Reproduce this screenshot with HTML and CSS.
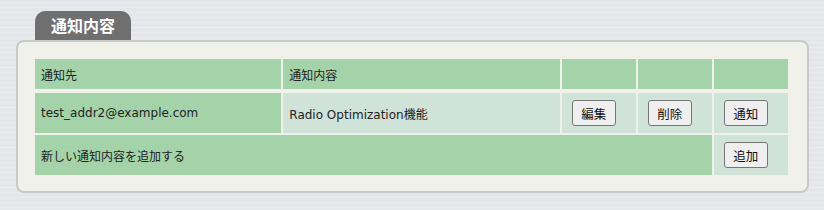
FILE: index.html
```html
<!DOCTYPE html>
<html lang="ja">
<head>
    <meta charset="UTF-8">
    <title>通知内容</title>
    <link rel="stylesheet" href="styles.css">
</head>
<body>

    <div class="page">
        <div class="tab">通知内容</div>

        <div class="panel">
            <table class="notify-table">
                <thead>
                    <tr>
                        <th class="col-addr">通知先</th>
                        <th class="col-content">通知内容</th>
                        <th class="col-btn"></th>
                        <th class="col-btn"></th>
                        <th class="col-btn"></th>
                    </tr>
                </thead>
                <tbody>
                    <tr>
                        <td class="addr">test_addr2@example.com</td>
                        <td class="light content">Radio Optimization機能</td>
                        <td class="light"><button class="btn">編集</button></td>
                        <td class="light"><button class="btn">削除</button></td>
                        <td class="light"><button class="btn">通知</button></td>
                    </tr>
                    <tr>
                        <td class="add-row" colspan="4">新しい通知内容を追加する</td>
                        <td class="light"><button class="btn">追加</button></td>
                    </tr>
                </tbody>
            </table>
        </div>
    </div>

</body>
</html>
```

FILE: styles.css
```css
body {
    margin: 0;
    font-family: "DejaVu Sans", "Noto Sans CJK JP", sans-serif;
    font-size: 12px;
    color: #222;
    background-color: #e3e5e9;
    background-image: repeating-linear-gradient(
        180deg,
        #e6e8ec 0px,
        #dfe1e5 1px,
        #eceef1 2px,
        #e2e4e8 4px,
        #e8eaee 5px
    );
    height: 210px;
}

.page {
    padding: 11px 0 0 16px;
}

.tab {
    display: inline-block;
    margin-left: 19px;
    width: 96px;
    height: 29px;
    line-height: 29px;
    text-align: center;
    background: #6f6f6f;
    color: white;
    font-family: "Noto Sans CJK JP", sans-serif;
    font-weight: bold;
    font-size: 16px;
    border-radius: 10px 10px 0 0;
    vertical-align: bottom;
}

.panel {
    width: 760px;
    padding: 15px 14px 14px 15px;
    background: #f1f1ec;
    border: 2px solid #c9c9c9;
    border-radius: 8px;
}

.notify-table {
    border-collapse: separate;
    border-spacing: 2px;
    width: 757px;
    table-layout: fixed;
}

.notify-table th {
    background: #a4d3a9;
    font-weight: normal;
    text-align: left;
    height: 30px;
    padding: 0 6px;
    border-bottom: 2px solid #f1f1ec;
    background-clip: padding-box;
}

.notify-table td {
    height: 40px;
    padding: 0 6px;
}

.col-addr { width: 234px; }
.col-content { width: 264px; }
.col-btn { width: 62px; }

.addr,
.add-row {
    background: #a4d3a9;
}

.light {
    background: #cfe3d8;
}

.notify-table td.light {
    padding-left: 10px;
}

.notify-table td.content {
    padding-left: 6px;
}

.add-row {
    height: 41px;
}

.btn {
    font-family: "Noto Sans CJK JP", sans-serif;
    font-size: 12.5px;
    color: #111;
    background: #efefef;
    border: 1px solid #767676;
    border-radius: 3px;
    width: 44px;
    height: 26px;
    padding: 0;
    cursor: pointer;
}
```
